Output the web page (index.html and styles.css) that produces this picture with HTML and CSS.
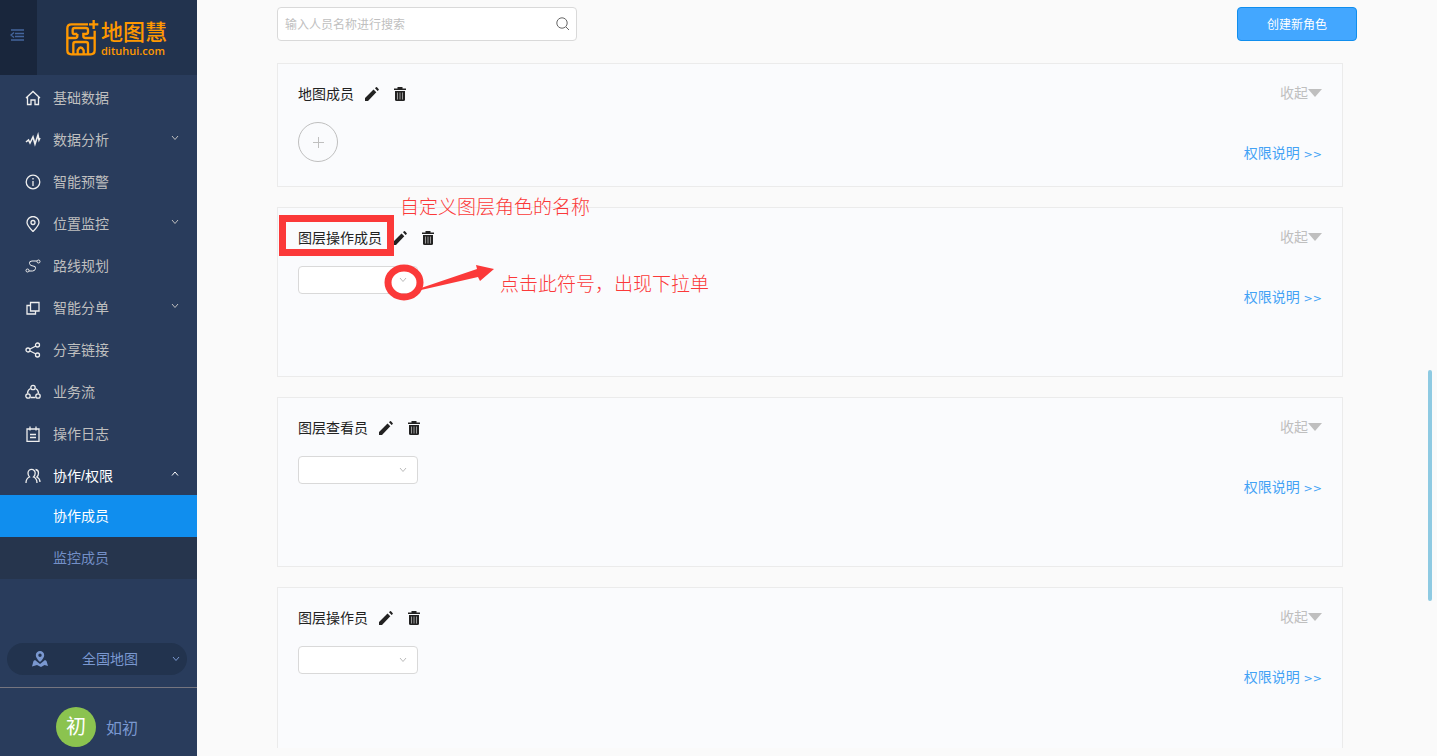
FILE: index.html
```html
<!DOCTYPE html>
<html lang="zh-CN">
<head>
    <meta charset="utf-8">
    <title>协作成员</title>
    <link rel="stylesheet" href="styles.css">
</head>
<body>

<!-- shared icons -->
<svg class="sprite" aria-hidden="true">
    <symbol id="down" viewBox="0 0 8 8"><path d="M1 2l3 3.500L7 2"/></symbol>
    <symbol id="up" viewBox="0 0 8 8"><path d="M1 5.500L4 2l3 3.500"/></symbol>
    <symbol id="pencil" viewBox="0 0 14 14"><path d="M0 14v-3L8.500 2.500l2.800 2.800L3 14zM10 1.300L11.200 0q.8.300 1.300.8T14 2.800L12.600 4z"/></symbol>
    <symbol id="trash" viewBox="0 0 12 14"><path d="M3.500 0h5v1.500H12V3H0V1.500h3.500z"/><path d="M1 4h10v8.500Q11 14 9.500 14h-7Q1 14 1 12.500z"/><path class="slats" d="M3.500 5.500v7M6 5.500v7M8.500 5.500v7"/></symbol>
</svg>

<div class="app">
    <aside class="sidebar">
        <div class="brand">
            <button class="toggle" aria-label="收起菜单">
                <svg width="14" height="12" viewBox="0 0 14 12"><path d="M1 1h13M5 4.500h9M5 7.500h9M1 11h13M4 3.500L1 6l3 2.500"/></svg>
            </button>
            <a class="logo" href="#">
                <svg width="33" height="36" viewBox="200 60 99 108"><path d="M266 73H216Q204 73 204 85V151Q204 163 216 163H274Q286 163 286 151V92M269 73H297M283 60V87M234 102H223Q220 102 220 96V90Q220 84 226 84H260Q266 84 266 90V96Q266 102 260 102H252V108Q252 114 258 114H284M234 102V108Q234 114 228 114H206M222 163V132Q222 126 228 126H260Q266 126 266 132V163M235 163V151Q244 134 253 151V163"/></svg>
                <span class="logo-text">
                    <b>地图慧</b>
                    <small>dituhui.com</small>
                </span>
            </a>
        </div>

        <nav class="menu">
            <a href="#"><svg class="icon" viewBox="0 0 16 16"><path d="M2.500 7v7.500H6V10h4v4.500h3.500V7M1 8l7-6.500L15 8"/></svg>基础数据</a>
            <a href="#"><svg class="icon bold" viewBox="0 0 16 16"><path d="M1 10l2.500-2L5 11l3-6 2 7 3-9 1 5 1-2"/></svg>数据分析<svg class="caret"><use href="#down"/></svg></a>
            <a href="#"><svg class="icon" viewBox="0 0 16 16"><circle cx="8" cy="8" r="6.800"/><path d="M8 7v5M8 4v1.500"/></svg>智能预警</a>
            <a href="#"><svg class="icon" viewBox="0 0 16 16"><path d="M8 15.500Q2 9.500 2 6.500a6 6 0 0 1 12 0Q14 9.500 8 15.500z"/><circle cx="8" cy="6.500" r="2"/></svg>位置监控<svg class="caret"><use href="#down"/></svg></a>
            <a href="#"><svg class="icon thin" viewBox="0 0 16 16"><circle cx="2.500" cy="12.500" r="1.500"/><circle cx="13.500" cy="3.500" r="1.500"/><path d="M12 3H7Q4 3 4.500 5.500T8 8q3 0 2.500 2.500T7.500 13H4"/></svg>路线规划</a>
            <a href="#"><svg class="icon" viewBox="0 0 16 16"><path d="M5.500 2.500h8.500v8.500H5.500zM5.500 5.500H2v8.500h8.500v-3"/></svg>智能分单<svg class="caret"><use href="#down"/></svg></a>
            <a href="#"><svg class="icon" viewBox="0 0 16 16"><circle cx="3" cy="8" r="2"/><circle cx="12.500" cy="3" r="2"/><circle cx="12.500" cy="13" r="2"/><path d="M5 7l6-3M5 9l6 3"/></svg>分享链接</a>
            <a href="#"><svg class="icon" viewBox="0 0 16 16"><circle cx="8" cy="3.500" r="2.200"/><circle cx="3" cy="12" r="2.200"/><circle cx="13" cy="12" r="2.200"/><path d="M5.500 4.500Q2.500 6 2.500 9.500M10.500 4.500q3 1.500 3 5M5.500 13.500h5"/></svg>业务流</a>
            <a href="#"><svg class="icon" viewBox="0 0 16 16"><path d="M2 3h12v12.300H2zM5 .5v4M11 .5v4M5 8.500h6M5 11.500h6"/></svg>操作日志</a>
            <a href="#" class="open"><svg class="icon" viewBox="0 0 16 16"><path d="M1 15q0-4.500 3.500-6Q3 7.500 3 5a3.600 3.600 0 0 1 7.200 0Q10.200 7.500 8.500 9q3.500 1.500 3.500 6M10.500 1.500Q13.500 2 13.500 5q0 2.500-1.700 4Q15 10.500 15 14"/></svg>协作/权限<svg class="caret"><use href="#up"/></svg></a>
            <div class="submenu">
                <a href="#" class="active">协作成员</a>
                <a href="#">监控成员</a>
            </div>
        </nav>

        <div class="sidebar-foot">
            <button class="map-switch">
                <svg class="map-icon" width="16" height="16" viewBox="0 0 16 16"><path fill-rule="evenodd" d="M8 0a4.200 4.200 0 0 1 4.200 4.200Q12.200 7 8 11 3.800 7 3.800 4.200A4.200 4.200 0 0 1 8 0zM8 2.500a1.700 1.700 0 1 0 0 3.400 1.700 1.700 0 0 0 0-3.400z"/><path d="M3 9l5 4 5-4 1.500 1L16 15l-3.500-1L9 16l-4-2-5 1.500L1.500 10z"/></svg>
                <span>全国地图</span>
                <svg class="caret"><use href="#down"/></svg>
            </button>
            <div class="user">
                <span class="avatar">初</span>
                <span class="user-name">如初</span>
            </div>
        </div>
    </aside>

    <main class="main">
        <div class="toolbar">
            <div class="search">
                <input type="text" placeholder="输入人员名称进行搜索" aria-label="输入人员名称进行搜索">
                <svg width="14" height="14" viewBox="0 0 14 14"><circle cx="6" cy="6" r="5.200"/><path d="M10 10l3 3"/></svg>
            </div>
            <button class="create">创建新角色</button>
        </div>

        <div class="roles">
            <section class="card short">
                <div>
                    <div class="card-title">地图成员
                        <button aria-label="编辑"><svg width="14" height="14"><use href="#pencil"/></svg></button>
                        <button aria-label="删除"><svg width="12" height="14"><use href="#trash"/></svg></button>
                    </div>
                    <button class="add" aria-label="添加成员"><svg width="11" height="11" viewBox="0 0 11 11"><path d="M5.500 0v11M0 5.500h11"/></svg></button>
                </div>
                <div class="card-side">
                    <button class="fold">收起<i></i></button>
                    <a href="#">权限说明 <span>&gt;&gt;</span></a>
                </div>
            </section>

            <section class="card">
                <div>
                    <div class="card-title">图层操作成员
                        <button aria-label="编辑"><svg width="14" height="14"><use href="#pencil"/></svg></button>
                        <button aria-label="删除"><svg width="12" height="14"><use href="#trash"/></svg></button>
                    </div>
                    <div class="select"><select aria-label="图层操作成员"><option></option></select><svg class="caret"><use href="#down"/></svg></div>
                </div>
                <div class="card-side">
                    <button class="fold">收起<i></i></button>
                    <a href="#">权限说明 <span>&gt;&gt;</span></a>
                </div>
                <!-- help marks over the card -->
                <svg class="marks" width="220" height="96" viewBox="0 0 220 96">
                    <rect x="4.500" y="10.500" width="108" height="34"/>
                    <ellipse cx="126" cy="74.500" rx="16" ry="14.500"/>
                    <path d="M143 80L199 61 198 57 216 61 202 73 200 69 143 82z"/>
                </svg>
                <span class="note note-name">自定义图层角色的名称</span>
                <span class="note note-select">点击此符号，出现下拉单</span>
            </section>

            <section class="card">
                <div>
                    <div class="card-title">图层查看员
                        <button aria-label="编辑"><svg width="14" height="14"><use href="#pencil"/></svg></button>
                        <button aria-label="删除"><svg width="12" height="14"><use href="#trash"/></svg></button>
                    </div>
                    <div class="select"><select aria-label="图层查看员"><option></option></select><svg class="caret"><use href="#down"/></svg></div>
                </div>
                <div class="card-side">
                    <button class="fold">收起<i></i></button>
                    <a href="#">权限说明 <span>&gt;&gt;</span></a>
                </div>
            </section>

            <section class="card">
                <div>
                    <div class="card-title">图层操作员
                        <button aria-label="编辑"><svg width="14" height="14"><use href="#pencil"/></svg></button>
                        <button aria-label="删除"><svg width="12" height="14"><use href="#trash"/></svg></button>
                    </div>
                    <div class="select"><select aria-label="图层操作员"><option></option></select><svg class="caret"><use href="#down"/></svg></div>
                </div>
                <div class="card-side">
                    <button class="fold">收起<i></i></button>
                    <a href="#">权限说明 <span>&gt;&gt;</span></a>
                </div>
            </section>
        </div>
        <div class="scroll-thumb"></div>
    </main>
</div>

</body>
</html>
```
FILE: styles.css
```css
* {
    box-sizing: border-box;
}

body {
    margin: 0;
    font-family: "Liberation Sans", "Noto Sans CJK SC", sans-serif;
    font-size: 14px;
    line-height: 20px;
    color: #222;
    background: #fafafa;
}

a {
    text-decoration: none;
}

button {
    font: inherit;
    padding: 0;
    border: none;
    background: none;
    cursor: pointer;
}

svg {
    fill: none;
    stroke: currentColor;
    flex: none;
}

.sprite {
    position: absolute;
    width: 0;
    height: 0;
}

.caret {
    width: 8px;
    height: 8px;
}

.app {
    display: flex;
    height: 100vh;
    overflow: hidden;
}

/* sidebar */
.sidebar {
    display: flex;
    flex-direction: column;
    flex: none;
    width: 197px;
    background: #293c5c;
}

.brand {
    display: flex;
    height: 75px;
    background: #22334e;
}

.toggle {
    display: flex;
    align-items: center;
    justify-content: center;
    width: 37px;
    padding: 0 3px 6px 0;
    color: #44659c;
    background: #19263c;
    stroke-width: 1.4;
}

.logo {
    display: flex;
    align-items: center;
    gap: 2px;
    margin-left: 29px;
    color: #ff9800;
}

.logo svg {
    stroke-width: 7;
}

.logo-text b,
.logo-text small {
    display: block;
}

.logo-text b {
    font-size: 22px;
    line-height: 26px;
    font-weight: 500;
}

.logo-text small {
    font-family: "Open Sans", sans-serif;
    font-size: 11px;
    line-height: 10px;
    font-weight: 600;
}

.menu a {
    display: flex;
    align-items: center;
    height: 42px;
    padding: 4px 18px 0 25px;
    color: #bfbfbf;
}

.menu .icon {
    width: 16px;
    height: 16px;
    margin-right: 12px;
    color: #eee;
    stroke-width: 1.3;
}

.menu .bold {
    stroke-width: 1.6;
}

.menu .thin {
    stroke-width: 1;
}

.menu .caret {
    margin-left: auto;
    margin-bottom: 4px;
}

.menu .open {
    color: #fff;
}

.submenu {
    background: #26354d;
}

.menu .submenu a {
    padding: 0 0 0 53px;
    color: #738fc6;
}

.menu .submenu .active {
    color: #fff;
    background: #108eee;
}

.sidebar-foot {
    margin-top: auto;
    color: #7a98d0;
}

.map-switch {
    display: flex;
    align-items: center;
    width: 180px;
    height: 32px;
    margin: 0 7px 12px;
    padding: 0 7px 0 25px;
    border-radius: 16px;
    color: inherit;
    background: #22334e;
}

.map-switch span {
    margin: 0 auto;
}

.map-icon {
    fill: currentColor;
    stroke: none;
}

.user {
    display: flex;
    align-items: center;
    gap: 10px;
    height: 69px;
    padding: 10px 0 0 56px;
    border-top: 1px solid #75757f;
    font-size: 16px;
}

.user-name {
    padding-top: 3px;
}

.avatar {
    width: 40px;
    height: 40px;
    border-radius: 50%;
    font-size: 20px;
    line-height: 40px;
    text-align: center;
    color: #fff;
    background: #8bc34f;
}

/* content */
.main {
    position: relative;
    display: flex;
    flex: 1;
    flex-direction: column;
    padding: 7px 80px 8px;
}

.toolbar {
    display: flex;
    justify-content: space-between;
    margin-bottom: 22px;
    font-size: 12px;
}

.search {
    display: flex;
    align-items: center;
    width: 300px;
    height: 34px;
    padding: 0 6px 0 7px;
    border: 1px solid #d9d9d9;
    border-radius: 4px;
    color: #666;
    background: #fff;
}

.search input {
    flex: 1;
    min-width: 0;
    padding: 2px 0 0;
    border: none;
    outline: none;
    font: inherit;
}

.search input::placeholder {
    color: #bfbfbf;
}

.create {
    width: 120px;
    height: 34px;
    padding-top: 2px;
    border: 1px solid #108eee;
    border-radius: 4px;
    color: #fff;
    background: #43a7ff;
}

.roles {
    flex: 1;
    min-height: 0;
    margin-right: 14px;
    overflow: hidden;
}

.card {
    position: relative;
    display: flex;
    justify-content: space-between;
    min-height: 170px;
    margin-bottom: 20px;
    padding: 20px;
    border: 1px solid #ebebeb;
    background: #fafbfd;
}

.short {
    min-height: 124px;
}

.card-title {
    display: flex;
    align-items: center;
    height: 20px;
    margin-bottom: 18px;
}

.card-title button {
    display: flex;
    margin-left: 11px;
    color: #222;
}

.card-title button + button {
    margin-left: 15px;
}

.card-title svg {
    fill: currentColor;
    stroke: none;
}

.slats {
    stroke: #999;
    stroke-width: 1;
}

.add {
    display: flex;
    align-items: center;
    justify-content: center;
    width: 40px;
    height: 40px;
    border: 1px solid #bfbfbf;
    border-radius: 50%;
    color: #bfbfbf;
}

.select {
    position: relative;
    width: 120px;
    height: 28px;
}

.select select {
    width: 100%;
    height: 100%;
    border: 1px solid #d9d9d9;
    border-radius: 4px;
    appearance: none;
    background: #fff;
}

.select .caret {
    position: absolute;
    top: 10px;
    right: 11px;
    color: #bbb;
}

.card-side {
    display: flex;
    flex-direction: column;
    align-items: flex-end;
    gap: 40px;
    margin-top: -1px;
}

.card-side a {
    color: #43a2f5;
}

.card-side a span {
    font-family: "DejaVu Sans", sans-serif;
    font-size: 11px;
}

.fold {
    display: flex;
    align-items: center;
    color: #bfbfbf;
}

/* small triangle after the fold label */
.fold i {
    border: 7px solid transparent;
    border-top: 8px solid #bfbfbf;
    border-bottom: 0;
}

.marks {
    position: absolute;
    top: 0;
    left: 0;
    color: #fb3939;
    pointer-events: none;
}

.marks rect {
    stroke-width: 7;
}

.marks ellipse {
    stroke-width: 7;
}

.marks path {
    fill: currentColor;
    stroke: none;
}

.note {
    position: absolute;
    font-size: 19px;
    font-weight: 300;
    color: #fb3939;
}

.note-name {
    top: -10px;
    left: 122px;
}

.note-select {
    top: 67px;
    left: 222px;
}

.scroll-thumb {
    position: absolute;
    top: 370px;
    right: 5px;
    width: 4px;
    height: 231px;
    border-radius: 2px;
    background: #8ecae2;
}
```
